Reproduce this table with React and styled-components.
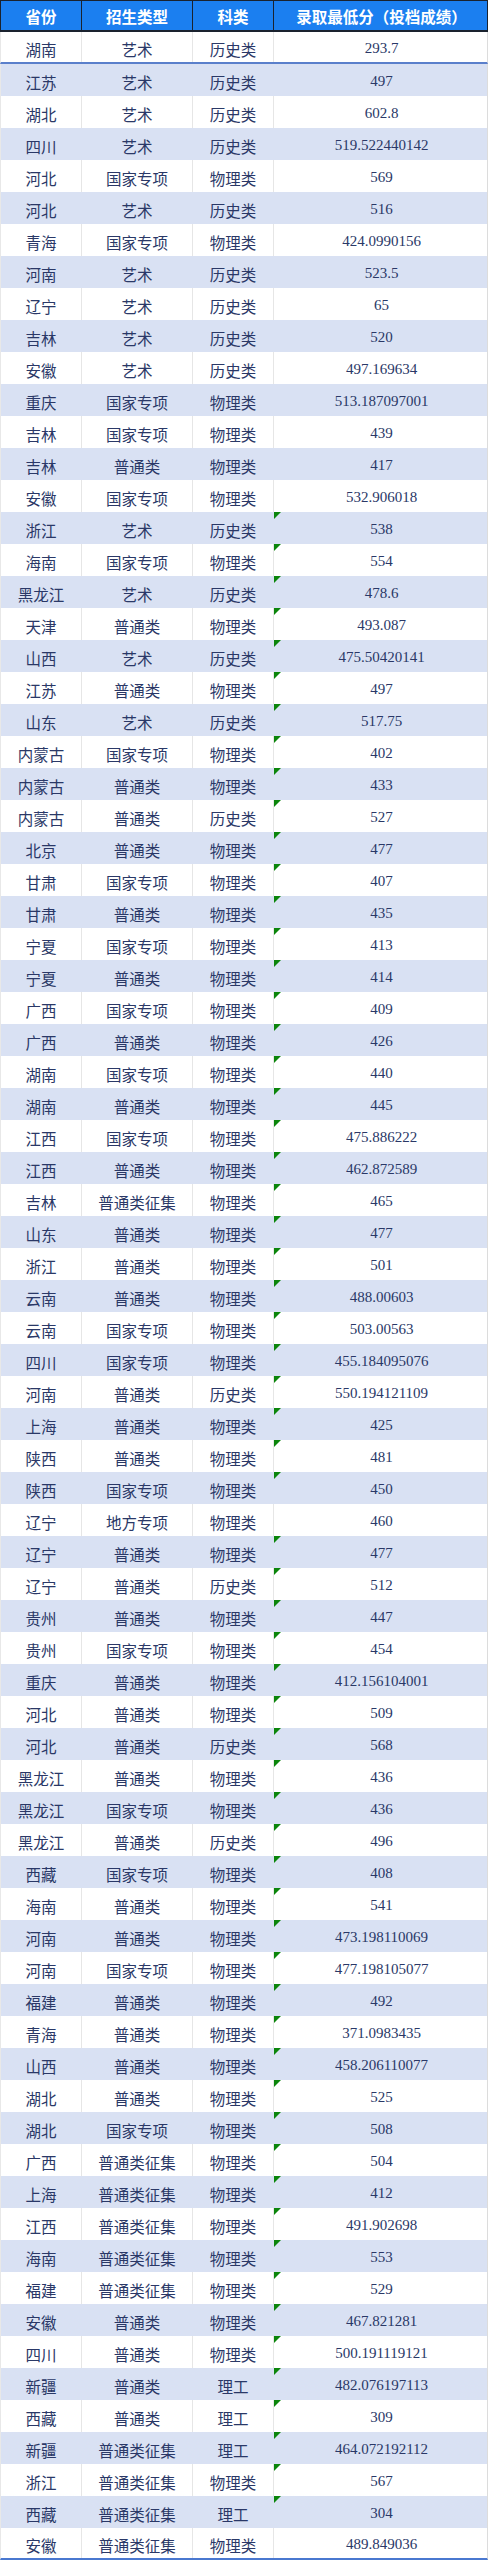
import styled, { createGlobalStyle } from 'styled-components'

const GlobalStyle = createGlobalStyle`
    html, body {
        margin: 0;
        padding: 0;
        background: #ffffff;
    }
`

const rows = `湖南|艺术|历史类|293.7
江苏|艺术|历史类|497
湖北|艺术|历史类|602.8
四川|艺术|历史类|519.522440142
河北|国家专项|物理类|569
河北|艺术|历史类|516
青海|国家专项|物理类|424.0990156
河南|艺术|历史类|523.5
辽宁|艺术|历史类|65
吉林|艺术|历史类|520
安徽|艺术|历史类|497.169634
重庆|国家专项|物理类|513.187097001
吉林|国家专项|物理类|439
吉林|普通类|物理类|417
安徽|国家专项|物理类|532.906018
浙江|艺术|历史类|538
海南|国家专项|物理类|554
黑龙江|艺术|历史类|478.6
天津|普通类|物理类|493.087
山西|艺术|历史类|475.50420141
江苏|普通类|物理类|497
山东|艺术|历史类|517.75
内蒙古|国家专项|物理类|402
内蒙古|普通类|物理类|433
内蒙古|普通类|历史类|527
北京|普通类|物理类|477
甘肃|国家专项|物理类|407
甘肃|普通类|物理类|435
宁夏|国家专项|物理类|413
宁夏|普通类|物理类|414
广西|国家专项|物理类|409
广西|普通类|物理类|426
湖南|国家专项|物理类|440
湖南|普通类|物理类|445
江西|国家专项|物理类|475.886222
江西|普通类|物理类|462.872589
吉林|普通类征集|物理类|465
山东|普通类|物理类|477
浙江|普通类|物理类|501
云南|普通类|物理类|488.00603
云南|国家专项|物理类|503.00563
四川|国家专项|物理类|455.184095076
河南|普通类|历史类|550.194121109
上海|普通类|物理类|425
陕西|普通类|物理类|481
陕西|国家专项|物理类|450
辽宁|地方专项|物理类|460
辽宁|普通类|物理类|477
辽宁|普通类|历史类|512
贵州|普通类|物理类|447
贵州|国家专项|物理类|454
重庆|普通类|物理类|412.156104001
河北|普通类|物理类|509
河北|普通类|历史类|568
黑龙江|普通类|物理类|436
黑龙江|国家专项|物理类|436
黑龙江|普通类|历史类|496
西藏|国家专项|物理类|408
海南|普通类|物理类|541
河南|普通类|物理类|473.198110069
河南|国家专项|物理类|477.198105077
福建|普通类|物理类|492
青海|普通类|物理类|371.0983435
山西|普通类|物理类|458.206110077
湖北|普通类|物理类|525
湖北|国家专项|物理类|508
广西|普通类征集|物理类|504
上海|普通类征集|物理类|412
江西|普通类征集|物理类|491.902698
海南|普通类征集|物理类|553
福建|普通类征集|物理类|529
安徽|普通类|物理类|467.821281
四川|普通类|物理类|500.191119121
新疆|普通类|理工|482.076197113
西藏|普通类|理工|309
新疆|普通类征集|理工|464.072192112
浙江|普通类征集|物理类|567
西藏|普通类征集|理工|304
安徽|普通类征集|物理类|489.849036`.split('\n').map(line => line.split('|'))

const columns = '81px 111px 81px 215px'

const Table = styled.div`
    width: 488px;
    display: flex;
    flex-direction: column;
`

const HeaderRow = styled.div`
    display: grid;
    grid-template-columns: ${columns};
    height: 32px;
    box-sizing: border-box;
    background-color: #1b7ff0;
    border: 1px solid #1a222e;
    border-bottom-width: 2px;
`

const HeadCell = styled.div`
    display: flex;
    align-items: center;
    justify-content: center;
    border-right: ${props => props.$last ? 'none' : '1.5px solid #1a222e'};
    font-family: "Noto Sans CJK SC", "Noto Sans", sans-serif;
    font-weight: bold;
    font-size: 15.5px;
    color: #ffffff;
    white-space: nowrap;
`

const Row = styled.div`
    display: grid;
    grid-template-columns: ${columns};
    height: 32px;
    box-sizing: border-box;
    background-color: ${props => props.$shade ? '#d9e1f3' : '#ffffff'};
    border-left: 1.5px solid #e8e8e8;
    border-right: 1px solid #dcdcdc;
    ${props => props.$first && `border-bottom: 2px solid #5a7fcb;`}
    ${props => props.$last && `border-bottom: 2px solid #4a78d0;`}
`

const Cell = styled.div`
    position: relative;
    display: flex;
    align-items: center;
    justify-content: center;
    padding-top: 3px;
    box-sizing: border-box;
    border-right: ${props => props.$last ? 'none' : `1.5px solid ${props.$shade ? '#d9e1f3' : '#e6e6e6'}`};
    font-family: "Liberation Serif", "Noto Sans CJK SC", serif;
    font-size: ${props => props.$num ? '15px' : '15.5px'};
    color: #2a3867;
    white-space: nowrap;
    ${props => props.$flag && `
        &::before {
            content: '';
            position: absolute;
            top: 0;
            left: 0;
            width: 0;
            height: 0;
            border-top: 7px solid #0b850b;
            border-right: 7px solid transparent;
        }
    `}
`

export default function App() {
    return (
        <>
            <GlobalStyle />
            <Table>
                <HeaderRow>
                    <HeadCell>省份</HeadCell>
                    <HeadCell>招生类型</HeadCell>
                    <HeadCell>科类</HeadCell>
                    <HeadCell $last>录取最低分（投档成绩）</HeadCell>
                </HeaderRow>
                {rows.map((r, i) => {
                    const shade = i % 2 === 1
                    const flag = i >= 15 && i <= 77 && i !== 46
                    return (
                        <Row key={i} $shade={shade} $first={i === 0} $last={i === rows.length - 1}>
                            <Cell $shade={shade}>{r[0]}</Cell>
                            <Cell $shade={shade}>{r[1]}</Cell>
                            <Cell $shade={shade}>{r[2]}</Cell>
                            <Cell $shade={shade} $num $last $flag={flag}>{r[3]}</Cell>
                        </Row>
                    )
                })}
            </Table>
        </>
    )
}
